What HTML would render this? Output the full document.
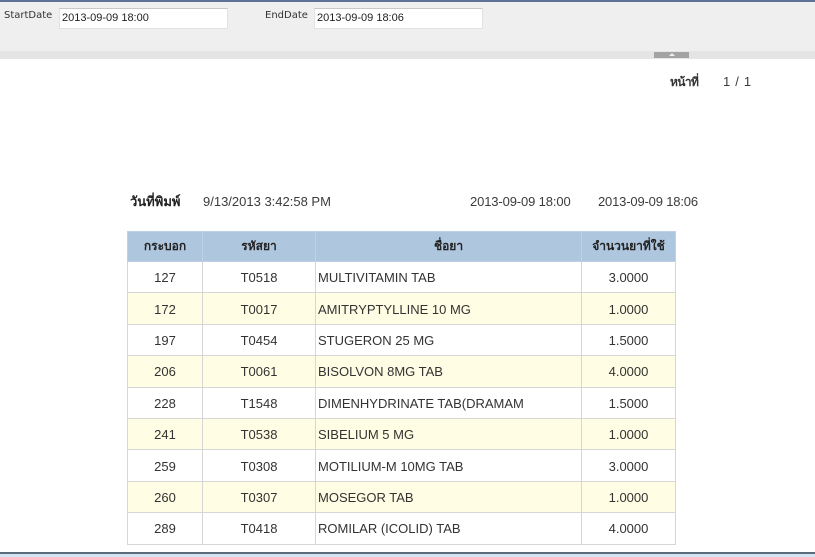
<!DOCTYPE html>
<html>
<head>
<meta charset="utf-8">
<style>
html,body{margin:0;padding:0;background:#fff}
body{width:815px;height:557px;position:relative;overflow:hidden;font-family:"Liberation Sans","Noto Sans CJK SC",sans-serif;color:#333}
.a{position:absolute;white-space:nowrap}
.lbl{font-family:"DejaVu Sans",sans-serif;font-size:10px;color:#333;line-height:14px}
.inp{position:absolute;top:8px;height:21px;width:169px;box-sizing:border-box;background:#fff;border:1px solid #e2e2e2;border-top-color:#c8c8c8;font-family:"Liberation Sans",sans-serif;font-size:11px;line-height:19px;padding-left:2px;color:#222}
.t{font-size:13px;line-height:16px;color:#3c3c3c}
table{position:absolute;left:127px;top:231px;width:548px;border-collapse:collapse;table-layout:fixed;font-size:13px;color:#333}
td,th{border:1px solid #d6d6d6;padding:0;text-align:center;overflow:hidden;white-space:nowrap}
th{background:#afc6df;border-color:#bdd0e5;font-size:12px;font-weight:bold;color:#222;height:29px;font-family:"Liberation Sans","Noto Sans CJK SC","Noto Sans CJK JP",sans-serif}
td{height:29.4px;padding-top:1px}
td.n{text-align:left;padding-left:2px}
tr.y td{background:#fffde3}
</style>
</head>
<body>
<div class="a" style="left:0;top:0;width:815px;height:2px;background:#5f7396"></div>
<div class="a" style="left:0;top:2px;width:815px;height:49px;background:#efefef"></div>
<div class="a" style="left:0;top:51px;width:815px;height:8px;background:#e4e4e4"></div>
<div class="a lbl" style="left:4px;top:9px">StartDate</div>
<div class="inp" style="left:59px">2013-09-09 18:00</div>
<div class="a lbl" style="left:265px;top:9px">EndDate</div>
<div class="inp" style="left:314px">2013-09-09 18:06</div>
<div class="a" style="left:654px;top:52px;width:35px;height:6px;background:#a3a3a3"></div>
<div class="a" style="left:669px;top:53px;width:0;height:0;border-left:3px solid transparent;border-right:3px solid transparent;border-bottom:3px solid #eee"></div>

<div class="a" style="left:670px;top:74px;font-size:12px;font-weight:bold;line-height:16px;letter-spacing:-.6px;color:#333;font-family:'Liberation Sans','Noto Sans CJK SC',sans-serif">หน้าที่</div>
<div class="a t" style="left:723px;top:74px;letter-spacing:.7px">1 / 1</div>

<div class="a" style="left:130px;top:194px;font-size:13px;font-weight:bold;line-height:16px;color:#222;font-family:'Liberation Sans','Noto Sans CJK SC',sans-serif">วันที่พิมพ์</div>
<div class="a t" style="left:203px;top:194px">9/13/2013 3:42:58 PM</div>
<div class="a t" style="left:470px;top:194px;letter-spacing:-.13px">2013-09-09 18:00</div>
<div class="a t" style="left:598px;top:194px;letter-spacing:-.17px">2013-09-09 18:06</div>

<table>
<colgroup><col style="width:75px"><col style="width:113px"><col style="width:266px"><col style="width:94px"></colgroup>
<tr><th>กระบอก</th><th>รหัสยา</th><th>ชื่อยา</th><th>จำนวนยาที่ใช้</th></tr>
<tr><td>127</td><td>T0518</td><td class="n">MULTIVITAMIN TAB</td><td>3.0000</td></tr>
<tr class="y"><td>172</td><td>T0017</td><td class="n">AMITRYPTYLLINE 10 MG</td><td>1.0000</td></tr>
<tr><td>197</td><td>T0454</td><td class="n">STUGERON 25 MG</td><td>1.5000</td></tr>
<tr class="y"><td>206</td><td>T0061</td><td class="n">BISOLVON 8MG TAB</td><td>4.0000</td></tr>
<tr><td>228</td><td>T1548</td><td class="n">DIMENHYDRINATE TAB(DRAMAM</td><td>1.5000</td></tr>
<tr class="y"><td>241</td><td>T0538</td><td class="n">SIBELIUM 5 MG</td><td>1.0000</td></tr>
<tr><td>259</td><td>T0308</td><td class="n">MOTILIUM-M 10MG TAB</td><td>3.0000</td></tr>
<tr class="y"><td>260</td><td>T0307</td><td class="n">MOSEGOR TAB</td><td>1.0000</td></tr>
<tr><td>289</td><td>T0418</td><td class="n">ROMILAR (ICOLID) TAB</td><td>4.0000</td></tr>
</table>

<div class="a" style="left:0;top:552px;width:815px;height:2px;background:#5d6b78"></div>
<div class="a" style="left:0;top:554px;width:815px;height:3px;background:#d5e4f3"></div>
</body>
</html>
